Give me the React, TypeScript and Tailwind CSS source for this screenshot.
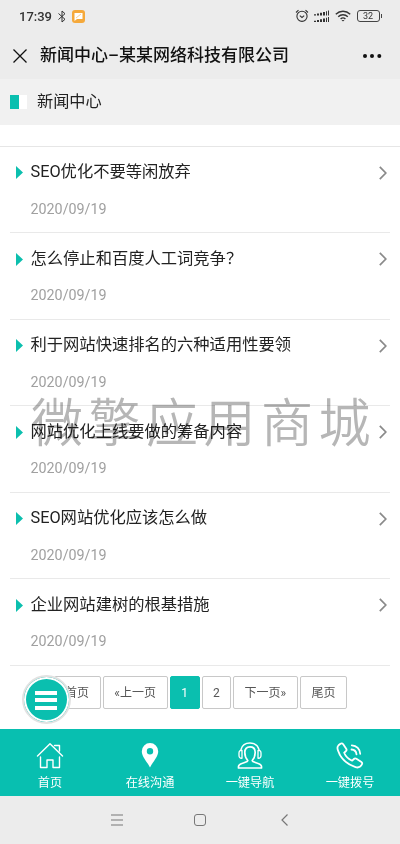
import type { ReactNode } from "react";

const news = [
  { title: "SEO优化不要等闲放弃", date: "2020/09/19" },
  { title: "怎么停止和百度人工词竞争？", date: "2020/09/19" },
  { title: "利于网站快速排名的六种适用性要领", date: "2020/09/19" },
  { title: "网站优化上线要做的筹备内容", date: "2020/09/19" },
  { title: "SEO网站优化应该怎么做", date: "2020/09/19" },
  { title: "企业网站建树的根基措施", date: "2020/09/19" },
];

const pages = [
  { label: "首页", width: "w-[47px]" },
  { label: "«上一页", width: "w-[65px]" },
  { label: "1", width: "w-[30px]", active: true },
  { label: "2", width: "w-[29px]" },
  { label: "下一页»", width: "w-[65px]" },
  { label: "尾页", width: "w-[47px]" },
];

function StatusBar() {
  return (
    <div className="flex h-[32px] items-center pl-[19px] pr-[18px] text-[#333]">
      <span className="text-[13px] leading-none font-medium">17:39</span>
      <svg className="ml-[5px]" width="10" height="13" viewBox="0 0 10 13" fill="none" stroke="currentColor" strokeWidth="1">
        <path d="M1.5 3.5 8 9.3 5 12V1l3 2.7-6.5 5.8" />
      </svg>
      <svg className="ml-[5px]" width="13" height="13" viewBox="0 0 13 13">
        <rect width="13" height="13" rx="3" fill="#f5a93b" />
        <path d="M2.5 3h8v6H5l-2.5 2z" fill="#fff" />
        <path d="m4 8 5-4" stroke="#f8c67a" strokeWidth=".8" />
      </svg>
      <svg className="ml-auto" width="14" height="14" viewBox="0 0 14 14" fill="none" stroke="currentColor" strokeWidth="1.1">
        <circle cx="7" cy="7.3" r="5.1" />
        <path d="M1 3.5 3.5 1.2M13 3.5l-2.5-2.3M4.8 6.6 7 8.5l2.2-1.9" />
      </svg>
      <svg className="ml-[5px]" width="16" height="13" viewBox="0 0 16 13" fill="currentColor">
        <path d="M0 4.2h2v1.3H0zM3 3.6h2v1.9H3zM6 2.8h2v2.7H6zM9 2h2v3.5H9zM12 1.3h1v4.2h-1zM14 .5h1v5h-1z" />
        <path d="M0 10.7h2V12H0zM3 10.1h2V12H3zM6 9.3h2V12H6zM9 8.5h2V12H9zM12 7.8h1V12h-1zM14 7h1v5h-1z" />
      </svg>
      <svg className="ml-[5px]" width="16" height="12" viewBox="0 0 16 12" fill="none" stroke="currentColor" strokeWidth="1.4">
        <path d="M.8 4.3c4.2-4 10.2-4 14.4 0M3.2 6.7c2.8-2.7 6.8-2.7 9.6 0M5.6 9c1.4-1.3 3.4-1.3 4.8 0" />
        <path d="m6.5 10 1.5 1.6L9.5 10z" fill="currentColor" stroke="none" />
      </svg>
      <div className="ml-[6px] flex items-center">
        <span className="flex h-[12px] w-[23px] items-center justify-center rounded-[3px] border border-[#444] text-[9px] leading-none">
          32
        </span>
        <span className="ml-px h-[4px] w-[1.5px] bg-[#444]" />
      </div>
    </div>
  );
}

function TitleBar() {
  return (
    <div className="flex h-[47px] items-center pl-[13px] pr-[18px] text-[#111]">
      <svg width="14" height="14" viewBox="0 0 14 14" stroke="currentColor" strokeWidth="1.3">
        <path d="m.5.5 13 13M13.5.5l-13 13" />
      </svg>
      <h1 className="ml-[13px] text-[17px] leading-none font-medium whitespace-nowrap">新闻中心–某某网络科技有限公司</h1>
      <svg className="ml-auto" width="20" height="4" viewBox="0 0 20 4" fill="currentColor">
        <circle cx="3" cy="2" r="2" />
        <circle cx="10" cy="2" r="2" />
        <circle cx="17.3" cy="2" r="2" />
      </svg>
    </div>
  );
}

function NewsRow({ title, date }: { title: string; date: string }) {
  return (
    <li className="flex h-[86.5px] border-b border-[#e9e9e9] pt-[13.5px]">
      <svg className="mt-[6px] ml-[6px] shrink-0" width="7" height="13" viewBox="0 0 7 13" fill="#0cbfae">
        <path d="M0 0v13l7-6.5z" />
      </svg>
      <div className="ml-[7.5px] grow">
        <h3 className="text-[16.3px] leading-[24px] whitespace-nowrap text-[#222]">{title}</h3>
        <p className="mt-[13.5px] text-[14.3px] leading-[22px] text-[#a0a0a0]">{date}</p>
      </div>
      <svg className="mt-[5.5px] mr-[3px] shrink-0" width="8" height="14" viewBox="0 0 8 14" fill="none" stroke="#8a8a8a" strokeWidth="1.7">
        <path d="m.8.8 6 6.2-6 6.2" />
      </svg>
    </li>
  );
}

function Pagination() {
  return (
    <div className="flex h-[64px] gap-[2.1px] pt-[10.5px] pl-[53.5px]">
      {pages.map((p) => (
        <span
          key={p.label}
          className={`${p.width} flex h-[33px] shrink-0 items-center justify-center rounded-[2px] border text-[12px] whitespace-nowrap ${
            p.active ? "border-[#0abfaf] bg-[#0abfaf] text-white" : "border-[#c8c8c8] text-[#555]"
          }`}
        >
          {p.label}
        </span>
      ))}
    </div>
  );
}

function Tab({ label, children }: { label: string; children: ReactNode }) {
  return (
    <div className="flex flex-1 flex-col items-center pt-[13px] text-white">
      <svg width="28" height="28" viewBox="0 0 28 28" fill="none" stroke="currentColor" strokeWidth="1.8" strokeLinejoin="round" strokeLinecap="round">
        {children}
      </svg>
      <span className="mt-[4px] text-[12.2px] leading-[18px]">{label}</span>
    </div>
  );
}

export default function App() {
  return (
    <div className="flex h-[844px] w-[400px] flex-col overflow-hidden bg-white font-[Roboto,'Noto_Sans_CJK_SC',sans-serif]">
      <header className="bg-[#ececec]">
        <StatusBar />
        <TitleBar />
      </header>

      {/* Section heading */}
      <div className="flex h-[46px] items-center bg-[#f1f1f1] pl-[10px]">
        <span className="h-[14px] w-[9px] bg-[#0abfaf]" />
        <span className="h-[14px] w-[8px] bg-white" />
        <h2 className="ml-[10px] text-[16.2px] leading-none text-[#222]">新闻中心</h2>
      </div>

      <div className="h-[21.5px] shrink-0 border-b border-[#e6e6e6]" />

      <main className="relative h-[582.5px]">
        <ul className="mx-[10px]">
          {news.map((item) => (
            <NewsRow key={item.title} {...item} />
          ))}
        </ul>
        <Pagination />
        {/* Watermark */}
        <div className="pointer-events-none absolute top-[240.5px] left-[31px] text-[52px] leading-[76px] font-[350] tracking-[5.5px] whitespace-nowrap text-[#b6b6b6] mix-blend-multiply">
          微擎应用商城
        </div>
        {/* Floating menu button */}
        <button className="absolute bottom-[5px] left-[21.5px] flex size-[49px] flex-col items-center justify-center gap-[3.5px] rounded-full border-2 border-[#e2e2e2] bg-[#0abfaf] pt-px shadow-[inset_0_0_0_2px_#fff]">
          <span className="h-[4px] w-[22px] bg-white" />
          <span className="h-[4px] w-[22px] bg-white" />
          <span className="h-[4px] w-[22px] bg-white" />
        </button>
      </main>

      <nav className="flex h-[67px] shrink-0 bg-[#08bfb0]">
        <Tab label="首页">
          <path d="M1.5 14 14 1.8 26.5 14M18.5 3.5h5V9M4.5 15v10.5H11V18h6v7.5h6.5V15" strokeWidth="1.4" />
        </Tab>
        <Tab label="在线沟通">
          <path d="M14 1a8.200 8.200 0 0 0-8.200 8.200c0 5.800 5.700 10.800 8.200 16.300 2.500-5.500 8.200-10.500 8.200-16.300A8.200 8.200 0 0 0 14 1zm0 5a3.200 3.200 0 1 1 0 6.400A3.200 3.200 0 0 1 14 6z" fill="currentColor" fillRule="evenodd" stroke="none" />
        </Tab>
        <Tab label="一键导航">
          <path d="M5 7.500C6.200 3 10 1 14 1s7.800 2 9 6.500" strokeWidth="1.400" />
          <path d="M6 8.300C4 8 3 9.300 3 11v2.500C3 15.200 4 16.500 6 16.200zM22 8.300c2-.3 3 1 3 2.700v2.500c0 1.700-1 3-3 2.700z" strokeWidth="1.300" />
          <path d="M11.800 18.500C9.800 16.300 8.800 14 8.800 10.500c0-3.700 1.800-5.700 5.200-5.700s5.200 2 5.200 5.700c0 3.500-1 5.800-3 8 0 2.500 9.300 2 9.300 6v1.500h-23v-1.500c0-4 9.300-3.500 9.300-6z" strokeWidth="1.700" />
        </Tab>
        <Tab label="一键拨号">
          <path d="M2.500 3.300 4.500 1.800c1-.7 2-.5 2.700.5l3 4.500c.6 1 .4 1.900-.4 2.500l-1.600 1.400c1.300 3.400 4.200 6.300 8 8l1.700-1.700c.8-.8 1.600-.8 2.500-.2l5 3.300c.9.600 1 1.500.4 2.500-1.500 2.500-3.500 3.500-6.300 2.500C11 22.300 4.500 16 2 8.500 1.200 6.300 1.200 4.500 2.500 3.300z" />
          <path d="M15.800 3.300c4.900.2 8.200 3.800 8.400 8.500M15.500 7.500c3 .2 4.700 2 5 4.800" strokeWidth="1.800" />
        </Tab>
      </nav>

      {/* System navigation */}
      <footer className="flex h-[48px] shrink-0 items-center bg-[#ececec] text-[#777]">
        <svg className="ml-[111px]" width="12" height="12" viewBox="0 0 12 12" stroke="currentColor" strokeWidth="1">
          <path d="M0 1h12M0 6h12M0 11h12" />
        </svg>
        <span className="ml-[71px] size-[12px] rounded-[3px] border border-[#777]" />
        <svg className="ml-[75px]" width="7" height="12" viewBox="0 0 7 12" fill="none" stroke="currentColor" strokeWidth="1.2">
          <path d="M6.5.5 1 6l5.500 5.500" />
        </svg>
      </footer>
    </div>
  );
}
